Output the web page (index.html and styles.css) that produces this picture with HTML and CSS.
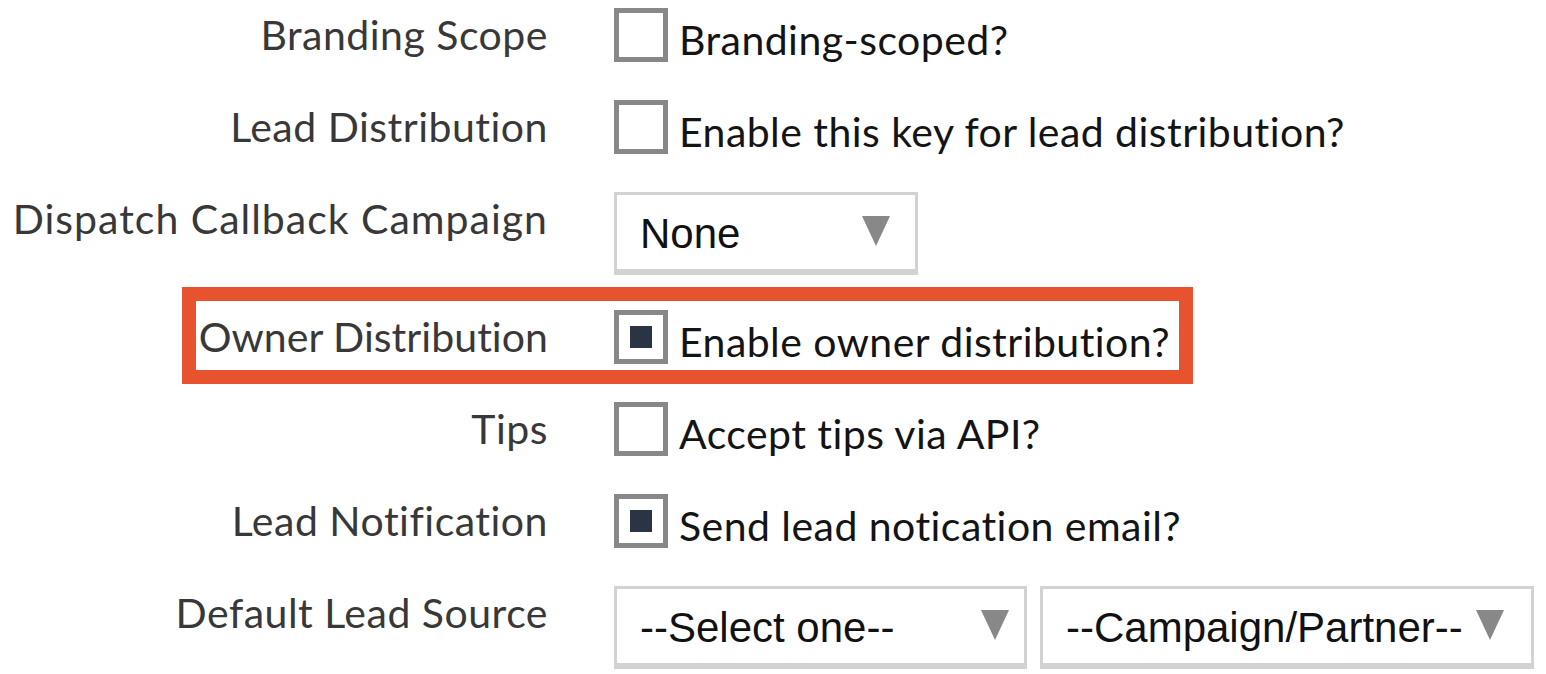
FILE: index.html
```html
<!DOCTYPE html>
<html lang="en">
<head>
<meta charset="utf-8">
<title>Lead settings</title>
<link rel="stylesheet" href="styles.css">
</head>
<body>
<div class="form">
  <div class="row row-check">
    <div class="label">Branding Scope</div>
    <div class="control"><span class="checkbox"></span><span class="opt">Branding-scoped?</span></div>
  </div>
  <div class="row row-check">
    <div class="label">Lead Distribution</div>
    <div class="control"><span class="checkbox"></span><span class="opt">Enable this key for lead distribution?</span></div>
  </div>
  <div class="row row-select">
    <div class="label label-wide">Dispatch Callback Campaign</div>
    <div class="control">
      <div class="select select-none"><span class="sel-text">None</span><span class="arrow"></span></div>
    </div>
  </div>
  <div class="row row-check row-highlight">
    <div class="label label-tight">Owner Distribution</div>
    <div class="control"><span class="checkbox checked"></span><span class="opt">Enable owner distribution?</span></div>
  </div>
  <div class="row row-check">
    <div class="label">Tips</div>
    <div class="control"><span class="checkbox"></span><span class="opt">Accept tips via API?</span></div>
  </div>
  <div class="row row-check">
    <div class="label">Lead Notification</div>
    <div class="control"><span class="checkbox checked"></span><span class="opt">Send lead notication email?</span></div>
  </div>
  <div class="row row-select">
    <div class="label">Default Lead Source</div>
    <div class="control">
      <div class="select select-source"><span class="sel-text">--Select one--</span><span class="arrow"></span></div>
      <div class="select select-partner"><span class="sel-text">--Campaign/Partner--</span><span class="arrow"></span></div>
    </div>
  </div>
</div>
</body>
</html>
```
FILE: styles.css
```css
html, body {
  margin: 0;
  padding: 0;
  background: #ffffff;
}

.form {
  padding-top: 8px;
  font-family: "Lato", "DejaVu Sans", sans-serif;
  font-variant-ligatures: none;
  font-feature-settings: "liga" 0, "clig" 0;
}

.row {
  display: flex;
  align-items: flex-start;
  margin-bottom: 35px;
}

.row-check {
  height: 57px;
}

.row-select {
  height: 83px;
}

.row-highlight {
  position: relative;
}

.row-highlight::before {
  content: "";
  position: absolute;
  left: 182px;
  top: -23px;
  width: 1011px;
  height: 97px;
  border: 14px solid #e8532f;
  box-sizing: border-box;
}

.label {
  width: 548px;
  flex: none;
  text-align: right;
  font-size: 41px;
  letter-spacing: 0.5px;
  line-height: 54px;
  color: #383838;
  white-space: nowrap;
}

.label-tight {
  letter-spacing: 0.05px;
}

.label-wide {
  letter-spacing: 1px;
}

.control {
  margin-left: 66px;
  display: flex;
  align-items: flex-start;
  gap: 13px;
}

.checkbox {
  width: 54px;
  height: 54px;
  flex: none;
  border: 5px solid #888888;
  box-sizing: border-box;
  background: #ffffff;
  display: flex;
  align-items: center;
  justify-content: center;
}

.checkbox.checked::after {
  content: "";
  width: 22px;
  height: 22px;
  background: #2b3445;
}

.opt {
  margin-left: -2px;
  font-size: 41px;
  letter-spacing: 0.45px;
  line-height: 54px;
  padding-top: 5px;
  color: #141414;
  white-space: nowrap;
}

.select {
  height: 83px;
  box-sizing: border-box;
  border: 3px solid #d2d2d2;
  border-bottom-width: 6px;
  display: flex;
  align-items: center;
  padding-top: 3px;
  padding-left: 23px;
  font-family: "Liberation Sans", Arial, sans-serif;
  font-size: 42px;
  color: #111111;
  background: #ffffff;
}

.sel-text {
  white-space: nowrap;
}

.arrow {
  margin-left: auto;
  width: 0;
  height: 0;
  border-left: 14px solid transparent;
  border-right: 14px solid transparent;
  border-top: 30px solid #888888;
  margin-top: -5px;
}

.select-none {
  width: 304px;
  padding-right: 25px;
}

.select-source {
  width: 413px;
  padding-right: 15px;
}

.select-partner {
  width: 494px;
  padding-right: 27px;
}
```
